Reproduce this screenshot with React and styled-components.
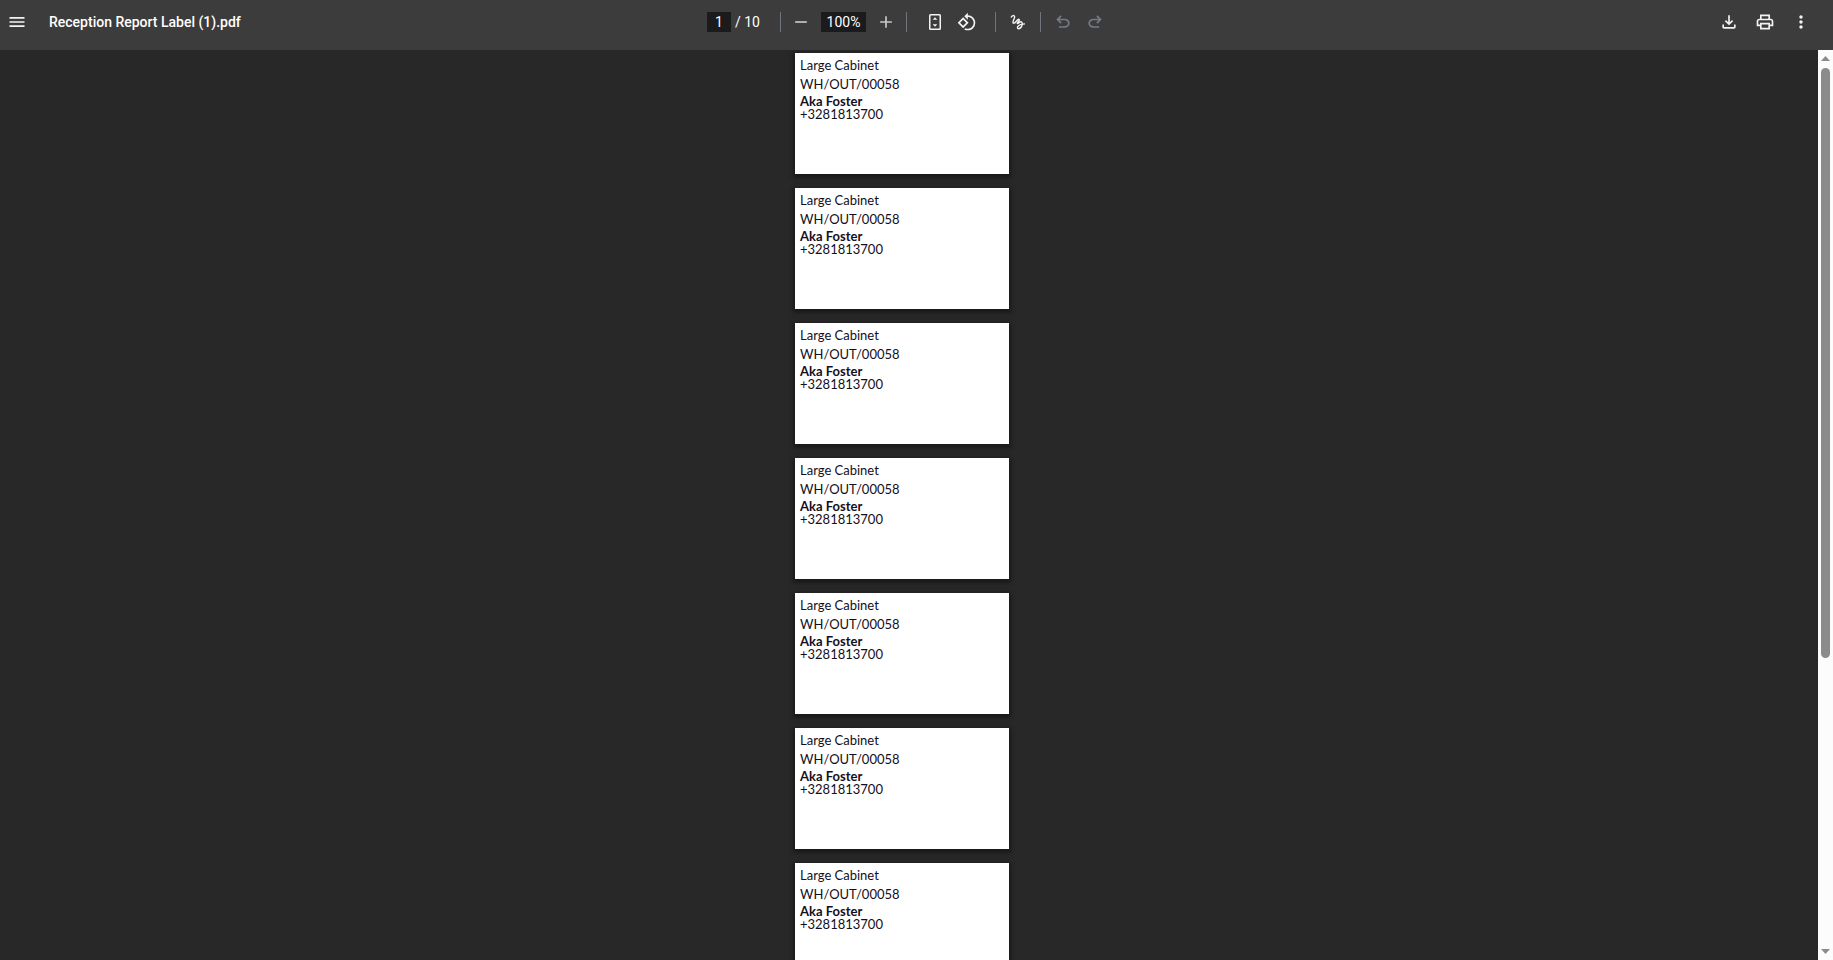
import React from 'react'
import styled, { createGlobalStyle } from 'styled-components'
import {
  MdAdd,
  MdMenu,
  MdMoreVert,
  MdRemove,
  MdRotate90DegreesCcw,
} from 'react-icons/md'

const toolbarGrey = '#3c3c3c'
const viewerGrey = '#282828'
const fieldBlack = '#1b1b1d'
const scrollGrey = '#8b8b8b'

const GlobalStyle = createGlobalStyle`
  * {
    box-sizing: border-box;
  }

  body {
    margin: 0;
    background: ${viewerGrey};
  }
`

const Viewer = styled.div`
  display: flex;
  flex-direction: column;
  height: 100vh;
  overflow: hidden;
`

const Toolbar = styled.header`
  display: grid;
  grid-template-columns: 1fr auto 1fr;
  flex: none;
  height: 50px;
  padding: 0 16px 6px 1px;
  background: ${toolbarGrey};
  color: #fff;
  font-family: Roboto, sans-serif;
  font-size: 14px;
`

const ToolbarSection = styled.div`
  display: flex;
  align-items: center;
  justify-content: ${props => props.$align || 'flex-start'};
  gap: ${props => props.$gap || 0}px;
`

const IconButton = styled.button`
  display: flex;
  align-items: center;
  justify-content: center;
  width: 32px;
  height: 32px;
  padding: 0;
  border: 0;
  border-radius: 50%;
  background: none;
  color: ${props => props.$color || '#f1f3f4'};
  cursor: pointer;

  &:disabled {
    color: #747a86;
    cursor: default;
  }

  svg {
    width: 20px;
    height: 20px;
    fill: currentColor;
  }
`

const Title = styled.h1`
  margin: 0 0 0 16px;
  font-size: 14px;
  font-weight: 500;
  line-height: 20px;
  white-space: nowrap;
`

const Field = styled.input`
  width: ${props => props.$width}px;
  height: 20px;
  padding: 0;
  border: 0;
  background: ${fieldBlack};
  color: #fff;
  font: inherit;
  line-height: 20px;
  text-align: center;
`

const PageCount = styled.span`
  width: 25px;
  margin-left: 4px;
  line-height: 20px;
  white-space: nowrap;
`

const ZoomControls = styled.div`
  display: flex;
  align-items: center;
  gap: 4px;
`

const Separator = styled.span`
  width: 1px;
  height: 20px;
  margin: 0 ${props => props.$after}px 0 ${props => props.$before}px;
  background: #70757c;
`

const Main = styled.main`
  display: flex;
  flex: 1;
  min-height: 0;
`

const Pages = styled.div`
  display: flex;
  flex: 1;
  flex-direction: column;
  align-items: center;
  gap: 14px;
  padding: 3px 14px 0 0;
  overflow: hidden;
`

const Page = styled.section`
  flex: none;
  width: 214px;
  height: 121px;
  padding: 3px 5px;
  background: #fff;
  box-shadow: 0 2px 4px 2px rgba(16, 16, 20, 0.6);
  color: #140e20;
  font-family: Lato, sans-serif;
  font-size: 13px;
`

const Line = styled.p`
  margin: 0;
  line-height: 19px;
`

const Contact = styled.address`
  margin-top: 1px;
  font-style: normal;
  line-height: 13px;

  strong {
    display: block;
  }
`

const Scrollbar = styled.div`
  display: flex;
  flex: none;
  flex-direction: column;
  align-items: center;
  width: 15px;
  padding: 6px 0;
  background: #fcfcfc;

  svg {
    flex: none;
    width: 9px;
    height: 6px;
    fill: ${scrollGrey};
  }
`

const Track = styled.div`
  flex: 1;
  width: 9px;
  margin: 6px 0;
`

const Thumb = styled.div`
  height: 67.5%;
  border-radius: 5px;
  background: ${scrollGrey};
`

const FitIcon = () => (
  <svg viewBox='0 0 20 20' aria-hidden='true'>
    <path
      fillRule='evenodd'
      d='M5.5 2h9A1.5 1.5 0 0 1 16 3.5v13a1.5 1.5 0 0 1-1.5 1.5h-9A1.5 1.5 0 0 1 4 16.5v-13A1.5 1.5 0 0 1 5.5 2Zm0 1.5v13h9v-13h-9Z'
    />
    <path d='m10 5.300 2.300 2.500H7.700L10 5.300ZM10 14.700l-2.300-2.500h4.600L10 14.700Z' />
  </svg>
)

const DrawIcon = () => (
  <svg viewBox='0 0 20 20' aria-hidden='true'>
    <path
      d='M3 5.500C4 3.600 6.400 2.600 6.600 4.800 6.800 7 4 9.300 5.200 11 7 12.600 9.200 6.600 11 7.300 12.500 8 9.300 10 9.300 11.300 9.600 12.300 11.600 9.600 13 9.800 15.800 10.400 13.500 16.800 10.600 16.800 8 16.600 9.600 11.900 17 11.900'
      fill='none'
      stroke='currentColor'
      strokeWidth='1.4'
      strokeLinejoin='round'
    />
  </svg>
)

const UNDO =
  'M280-200v-80h284q63 0 109.500-40T720-420q0-60-46.500-100T564-560H312l104 104-56 56-200-200 200-200 56 56-104 104h252q97 0 169.500 63T800-420q0 94-72.500 157T564-200H280Z'

const UndoIcon = () => (
  <svg viewBox='0 -960 960 960' aria-hidden='true'>
    <path d={UNDO} />
  </svg>
)

const RedoIcon = () => (
  <svg viewBox='0 -960 960 960' aria-hidden='true'>
    <path d={UNDO} transform='translate(960 0) scale(-1 1)' />
  </svg>
)

const DownloadIcon = () => (
  <svg viewBox='0 -960 960 960' aria-hidden='true'>
    <path d='M480-320 280-520l56-58 104 104v-326h80v326l104-104 56 58-200 200ZM240-160q-33 0-56.500-23.500T160-240v-120h80v120h480v-120h80v120q0 33-23.500 56.500T720-160H240Z' />
  </svg>
)

const PrintIcon = () => (
  <svg viewBox='0 -960 960 960' aria-hidden='true'>
    <path d='M640-640v-120H320v120h-80v-200h480v200h-80ZM640-200v-160H320v160h320Zm80 80H240v-160H80v-240q0-51 35-85.500t85-34.500h560q51 0 85.500 34.500T880-520v240H720v160Zm80-240v-160q0-17-11.500-28.500T760-560H200q-17 0-28.500 11.500T160-520v160h80v-80h480v80h80Z' />
  </svg>
)

const labels = Array.from({ length: 10 }, () => ({
  product: 'Large Cabinet',
  picking: 'WH/OUT/00058',
  name: 'Aka Foster',
  phone: '+3281813700',
}))

const Label = ({ product, picking, name, phone }) => (
  <Page>
    <Line>{product}</Line>
    <Line>{picking}</Line>
    <Contact>
      <strong>{name}</strong>
      {phone}
    </Contact>
  </Page>
)

const App = () => (
  <Viewer>
    <GlobalStyle />
    <Toolbar>
      <ToolbarSection>
        <IconButton aria-label='Menu'><MdMenu /></IconButton>
        <Title>Reception Report Label (1).pdf</Title>
      </ToolbarSection>
      <ToolbarSection>
        <Field $width={24} aria-label='Page number' defaultValue='1' />
        <PageCount>/ {labels.length}</PageCount>
        <Separator $before={20} $after={4} />
        <ZoomControls>
          <IconButton $color='#c8c8c8' aria-label='Zoom out'><MdRemove /></IconButton>
          <Field $width={45} aria-label='Zoom level' defaultValue='100%' />
          <IconButton $color='#c8c8c8' aria-label='Zoom in'><MdAdd /></IconButton>
        </ZoomControls>
        <Separator $before={4} $after={12} />
        <IconButton aria-label='Fit to page'><FitIcon /></IconButton>
        <IconButton aria-label='Rotate counterclockwise'><MdRotate90DegreesCcw /></IconButton>
        <Separator $before={12} $after={6} />
        <IconButton aria-label='Draw'><DrawIcon /></IconButton>
        <Separator $before={6} $after={6} />
        <IconButton disabled aria-label='Undo'><UndoIcon /></IconButton>
        <IconButton disabled aria-label='Redo'><RedoIcon /></IconButton>
      </ToolbarSection>
      <ToolbarSection $align='flex-end' $gap={4}>
        <IconButton aria-label='Download'><DownloadIcon /></IconButton>
        <IconButton aria-label='Print'><PrintIcon /></IconButton>
        <IconButton aria-label='More actions'><MdMoreVert /></IconButton>
      </ToolbarSection>
    </Toolbar>
    <Main>
      <Pages>
        {labels.map((label, i) =>
          <Label key={i} {...label} />
        )}
      </Pages>
      <Scrollbar aria-hidden='true'>
        <svg viewBox='0 0 9 6'><path d='M4.500 0 9 5H0Z' /></svg>
        <Track><Thumb /></Track>
        <svg viewBox='0 0 9 6'><path d='M4.500 6 0 1h9Z' /></svg>
      </Scrollbar>
    </Main>
  </Viewer>
)

export default App
